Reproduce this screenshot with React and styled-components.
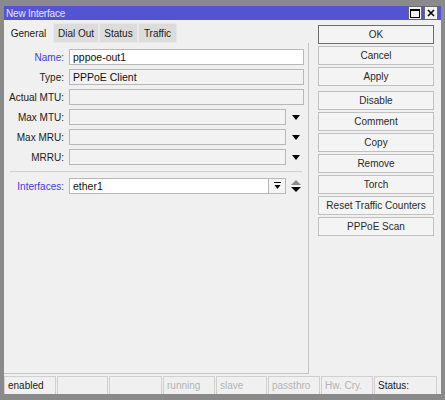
import React from 'react';
import styled, { createGlobalStyle } from 'styled-components';

const GlobalStyle = createGlobalStyle`
  html, body {
    margin: 0;
    padding: 0;
    background: #8c8c8c;
  }
  body {
    font-family: "Liberation Sans", Arial, sans-serif;
    font-size: 10px;
    color: #000;
  }
`

const Window = styled.div`
  width: 445px;
  height: 400px;
  box-sizing: border-box;
  padding: 6px 4px 6px 4px;
  background: #8a8a8a;
  display: flex;
  flex-direction: column;
`

const TitleBar = styled.div`
  height: 14px;
  background: #5454d2;
  display: flex;
  align-items: center;
  padding-left: 2px;
  color: #e4e4ff;
  font-size: 10px;
  letter-spacing: -0.2px;
`

const TitleText = styled.div`
  flex: 1;
`

const TitleButton = styled.div`
  width: 12px;
  height: 12px;
  margin-left: 2px;
  background: #f2f2f2;
  border: 1px solid #6a6a6a;
  display: flex;
  align-items: center;
  justify-content: center;
  &:last-child {
    margin-right: 3px;
  }
`

const Body = styled.div`
  flex: 1;
  background: #f0f0f0;
  display: flex;
  flex-direction: column;
`

const Main = styled.div`
  flex: 1;
  display: flex;
`

const LeftCol = styled.div`
  width: 305px;
  display: flex;
  flex-direction: column;
  padding-top: 3px;
`

const Tabs = styled.div`
  display: flex;
  height: 20px;
`

const Tab = styled.div`
  height: 20px;
  box-sizing: border-box;
  width: ${p => p.$w}px;
  display: flex;
  align-items: center;
  justify-content: center;
  color: #202020;
  background: ${p => (p.$active ? '#f0f0f0' : '#dcdcdc')};
  border: 1px solid ${p => (p.$active ? 'transparent' : '#e8e8e8')};
`

const Panel = styled.div`
  flex: 1;
  border-right: 1px solid #c4c4c4;
  border-bottom: 1px solid #c4c4c4;
  padding-top: 6px;
  display: flex;
  flex-direction: column;
  gap: 4px;
`

const Row = styled.div`
  display: flex;
  align-items: center;
  height: 16px;
`

const Label = styled.div`
  width: 60px;
  text-align: right;
  padding-right: 5px;
  color: ${p => (p.$blue ? '#3e3ee0' : '#202020')};
  white-space: nowrap;
`

const Field = styled.div`
  width: ${p => p.$w}px;
  height: 16px;
  box-sizing: border-box;
  border: 1px solid #b8b8b8;
  background: ${p => (p.$white ? '#ffffff' : '#f2f2f2')};
  padding-left: 3px;
  display: flex;
  align-items: center;
  font-size: 10.5px;
  color: #101010;
`

const ArrowSlot = styled.div`
  width: 18px;
  height: 16px;
  display: flex;
  align-items: center;
  justify-content: center;
  padding-left: 1px;
`

const DropButton = styled.div`
  width: 17px;
  height: 16px;
  box-sizing: border-box;
  border: 1px solid #b8b8b8;
  border-left: none;
  background: #f4f4f4;
  display: flex;
  align-items: center;
  justify-content: center;
`

const Separator = styled.div`
  height: 1px;
  background: #cfcfcf;
  margin: 2px 6px 2px 6px;
`

const RightCol = styled.div`
  width: 116px;
  margin-left: 9px;
  padding-top: 5px;
  display: flex;
  flex-direction: column;
  gap: 2px;
`

const Button = styled.div`
  height: 19px;
  box-sizing: border-box;
  border: 1px solid ${p => (p.$default ? '#6a6a6a' : '#c0c0c0')};
  background: #f4f4f4;
  display: flex;
  align-items: center;
  justify-content: center;
  font-size: 10px;
  color: #2a2a2a;
  margin-top: ${p => (p.$spaced ? '3px' : '0')};
`

const StatusBar = styled.div`
  height: 18px;
  display: flex;
  gap: 1px;
  padding: 2px 0 0 0;
`

const StatusCell = styled.div`
  width: ${p => p.$w}px;
  box-sizing: border-box;
  border: 1px solid #d0d0d0;
  border-bottom: none;
  padding-left: 3px;
  display: flex;
  align-items: center;
  color: ${p => (p.$dim ? '#b4b4b4' : '#202020')};
`

const Down = () => (
  <svg width="8" height="5" viewBox="0 0 8 5">
    <path d="M0 0 H8 L4 5 Z" fill="#000" />
  </svg>
)

const DropIcon = () => (
  <svg width="7" height="8" viewBox="0 0 7 8">
    <rect x="0" y="0" width="7" height="1" fill="#000" />
    <path d="M0.5 3 H6.5 L3.5 7 Z" fill="#000" />
  </svg>
)

const UpDown = () => (
  <svg width="10" height="12" viewBox="0 0 10 12">
    <path d="M0 5 L5 0 L10 5 Z" fill="#8c8c8c" />
    <path d="M0 7 H10 L5 12 Z" fill="#000" />
  </svg>
)

const App = () => {
  const rows = [
    { label: 'Name:', value: 'pppoe-out1', blue: true, white: true },
    { label: 'Type:', value: 'PPPoE Client' },
    { label: 'Actual MTU:', value: '' },
    { label: 'Max MTU:', value: '', arrow: true },
    { label: 'Max MRU:', value: '', arrow: true },
    { label: 'MRRU:', value: '', arrow: true },
  ]
  const buttons = ['OK', 'Cancel', 'Apply', 'Disable', 'Comment', 'Copy', 'Remove', 'Torch', 'Reset Traffic Counters', 'PPPoE Scan']
  const cells = [
    { t: 'enabled', w: 52 },
    { t: '', w: 51 },
    { t: '', w: 53 },
    { t: 'running', w: 52, dim: true },
    { t: 'slave', w: 51, dim: true },
    { t: 'passthro', w: 52, dim: true },
    { t: 'Hw. Cry.', w: 52, dim: true },
    { t: 'Status:', w: 63 },
  ]

  return (
    <>
      <GlobalStyle />
      <Window>
        <TitleBar>
          <TitleText>New Interface</TitleText>
          <TitleButton>
            <svg width="10" height="9" viewBox="0 0 10 9">
              <rect x="0.5" y="0.5" width="9" height="8" fill="none" stroke="#000" />
              <rect x="0" y="0" width="10" height="2" fill="#000" />
            </svg>
          </TitleButton>
          <TitleButton>
            <svg width="8" height="8" viewBox="0 0 8 8">
              <path d="M1 1 L7 7 M7 1 L1 7" stroke="#000" strokeWidth="1.6" />
            </svg>
          </TitleButton>
        </TitleBar>
        <Body>
          <Main>
            <LeftCol>
              <Tabs>
                <Tab $w={49} $active>General</Tab>
                <Tab $w={46}>Dial Out</Tab>
                <Tab $w={39}>Status</Tab>
                <Tab $w={39}>Traffic</Tab>
              </Tabs>
              <Panel>
                {rows.map(r => (
                  <Row key={r.label}>
                    <Label $blue={r.blue}>{r.label}</Label>
                    <Field $w={r.arrow ? 217 : 235} $white={r.white}>{r.value}</Field>
                    {r.arrow && (
                      <ArrowSlot>
                        <Down />
                      </ArrowSlot>
                    )}
                  </Row>
                ))}
                <Separator />
                <Row>
                  <Label $blue>Interfaces:</Label>
                  <Field $w={200} $white>ether1</Field>
                  <DropButton>
                    <DropIcon />
                  </DropButton>
                  <ArrowSlot>
                    <UpDown />
                  </ArrowSlot>
                </Row>
              </Panel>
            </LeftCol>
            <RightCol>
              {buttons.map((b, i) => (
                <Button key={b} $default={i === 0} $spaced={b === 'Disable'}>{b}</Button>
              ))}
            </RightCol>
          </Main>
          <StatusBar>
            {cells.map((c, i) => (
              <StatusCell key={i} $w={c.w} $dim={c.dim}>{c.t}</StatusCell>
            ))}
          </StatusBar>
        </Body>
      </Window>
    </>
  )
}

export default App;
